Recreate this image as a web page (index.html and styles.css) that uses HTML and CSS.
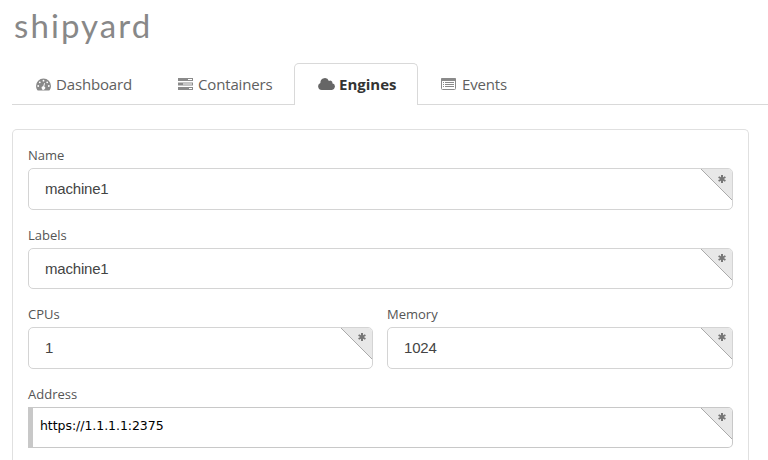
FILE: index.html
```html
<!DOCTYPE html>
<html lang="en">
<head>
<meta charset="utf-8">
<title>shipyard</title>
<link rel="stylesheet" href="styles.css">
</head>
<body>
<header class="logo"><span>shipyard</span></header>
<nav class="tabs">
  <a class="tab dashboard"><svg class="icon" width="15" height="13" viewBox="0 0 15 13"><path fill="currentColor" d="M7.5 .5A7.5 7.5 0 0 0 0 8c0 1.5.4 2.8 1.2 4 .1.2.4.4.7.4h11.2c.3 0 .6-.2.7-.4.8-1.2 1.2-2.5 1.2-4A7.5 7.5 0 0 0 7.5.5z"/><g fill="#fff"><circle cx="2.2" cy="8" r=".9"/><circle cx="3.8" cy="4.3" r=".9"/><circle cx="7.5" cy="2.7" r=".9"/><circle cx="11.2" cy="4.3" r=".9"/><circle cx="12.8" cy="8" r=".9"/><path d="m8.2 5 .8.2-.8 3.3a1.7 1.7 0 1 1-1-.2z"/></g></svg>Dashboard</a>
  <a class="tab containers"><svg class="icon" width="15" height="12" viewBox="0 0 15 12"><path fill="currentColor" d="M0 0h15v3H0zM0 4.5h15v3H0zM0 9h15v3H0z"/><path fill="#fff" d="M10 1h4v1h-4zM5 5.5h9v1H5zM11 10h3v1h-3z"/></svg>Containers</a>
  <a class="tab active"><svg class="icon" width="17" height="12" viewBox="0 0 17 12"><path fill="currentColor" d="M3.7 12A3.7 3.7 0 0 1 2.4 4.9V4.5a4.4 4.4 0 0 1 8.5-1.6 2.2 2.2 0 0 1 3.4 2.4A3.4 3.4 0 0 1 13.3 12z"/></svg>Engines</a>
  <a class="tab events"><svg class="icon" width="15" height="12" viewBox="0 0 15 12"><rect x=".5" y=".5" width="14" height="11" rx="1" fill="#fff" stroke="currentColor"/><path fill="currentColor" d="M0 1q0-1 1-1h13q1 0 1 1v2H0zM2 4h1v1H2zM4 4h9v1H4zM2 6h1v1H2zM4 6h9v1H4zM2 8h1v1H2zM4 8h9v1H4z"/></svg>Events</a>
</nav>
<form class="panel">
  <div class="field"><label>Name</label><div class="control">machine1<span class="corner"></span><svg class="star first" width="8" height="8" viewBox="0 0 8 8"><path d="M4 0v8M.6 2l6.8 4M.6 6l6.8-4"/></svg></div></div>
  <div class="field"><label>Labels</label><div class="control">machine1<span class="corner"></span><svg class="star" width="8" height="8" viewBox="0 0 8 8"><path d="M4 0v8M.6 2l6.8 4M.6 6l6.8-4"/></svg></div></div>
  <div class="row">
    <div class="field"><label>CPUs</label><div class="control">1<span class="corner"></span><svg class="star" width="8" height="8" viewBox="0 0 8 8"><path d="M4 0v8M.6 2l6.8 4M.6 6l6.8-4"/></svg></div></div>
    <div class="field"><label>Memory</label><div class="control">1024<span class="corner"></span><svg class="star" width="8" height="8" viewBox="0 0 8 8"><path d="M4 0v8M.6 2l6.8 4M.6 6l6.8-4"/></svg></div></div>
  </div>
  <div class="field last"><label>Address</label><div class="control address">https://1.1.1.1:2375<span class="corner"></span><svg class="star" width="8" height="8" viewBox="0 0 8 8"><path d="M4 0v8M.6 2l6.8 4M.6 6l6.8-4"/></svg></div></div>
</form>
</body>
</html>
```
FILE: styles.css
```css
* { box-sizing: border-box; }
body { margin: 0; background: #fff; font-family: "Open Sans", sans-serif; color: #555; }
.logo { height: 63px; padding: 4px 0 0 14px; font: 400 33px/42px Lato, sans-serif; letter-spacing: 2.1px; color: #888; }
.tabs { display: flex; height: 42px; margin-left: 12px; border-bottom: 1px solid #d9d9d9; }
.tab { display: flex; align-items: center; height: 42px; padding: 0 0 0 24px; font-size: 15px; letter-spacing: -.16px; color: #606060; white-space: nowrap; }
.icon { flex: none; margin-right: 5px; color: #8a8a8a; }
.dashboard { width: 142px; }
.containers { width: 140px; }
.active { width: 124px; padding: 0 0 1px 23px; border: 1px solid #d9d9d9; border-bottom: 0; border-radius: 5px 5px 0 0; background: #fff; color: #333; font-weight: 700; letter-spacing: 0; }
.active .icon { color: #666; margin-right: 4px; }
.events { padding-left: 23px; }
.events .icon { margin-right: 6px; }
.panel { width: 737px; height: 331px; margin: 24px 0 0 12px; padding: 16px 15px 0; border: 1px solid #e0e0e0; border-bottom: 0; border-radius: 5px 5px 0 0; }
.field { height: 79.6px; }
.last { height: auto; }
.row { display: grid; grid-template-columns: 345px 346px; gap: 14px; }
label { display: block; height: 22.4px; font-size: 13px; line-height: 19px; color: #555; }
.control { position: relative; height: 41.4px; padding-left: 16px; border: 1px solid #d4d4d4; border-radius: 5px; overflow: hidden; font: 15px/40px "Liberation Sans", sans-serif; letter-spacing: -.2px; color: #444; }
.row label { height: 22px; }
.row .control { height: 42px; }
.address { height: 41px; padding-left: 7px; border-color: #c8c8c8; border-left: 5px solid #c8c8c8; border-radius: 0 5px 5px 0; font: 12.5px/36px "DejaVu Sans", sans-serif; letter-spacing: -.05px; color: #000; }
.corner { position: absolute; top: 0; right: 0; width: 31px; height: 31px; background: linear-gradient(45deg, transparent 49%, #aaa 49%, #aaa 51%, #e8e8e8 51%); }
.star { position: absolute; top: 5px; right: 6px; fill: none; stroke: #777; stroke-width: 2; }
.star.first { top: 6px; }
```
